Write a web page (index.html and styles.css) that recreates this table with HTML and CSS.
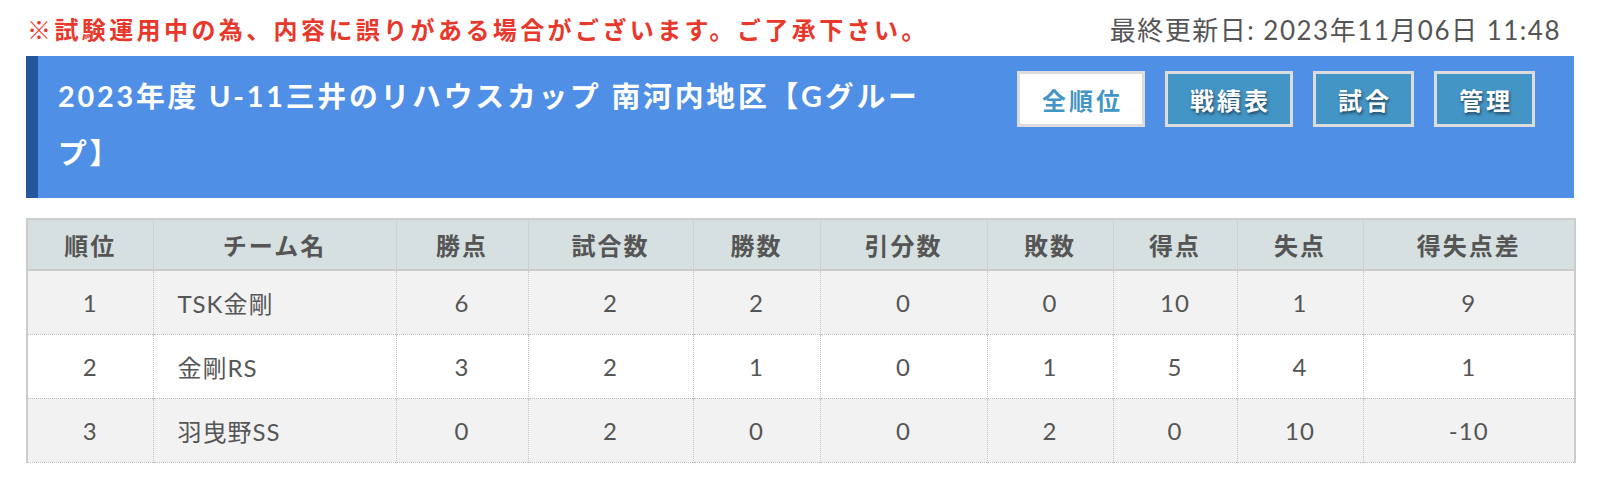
FILE: index.html
```html
<!DOCTYPE html>
<html lang="ja">
<head>
<meta charset="utf-8">
<title>順位表</title>
<link rel="stylesheet" href="styles.css">
</head>
<body>
<div class="page">
  <div class="topbar">
    <p class="notice">※試験運用中の為、内容に誤りがある場合がございます。ご了承下さい。</p>
    <p class="updated">最終更新日: 2023年11月06日 11:48</p>
  </div>
  <div class="header">
    <h1 class="title">2023年度 U-11三井のリハウスカップ 南河内地区【Gグループ】</h1>
    <nav class="buttons">
      <a class="btn btn-active">全順位</a>
      <a class="btn">戦績表</a>
      <a class="btn">試合</a>
      <a class="btn">管理</a>
    </nav>
  </div>
  <table class="standings">
    <colgroup>
      <col class="c-rank"><col class="c-team"><col class="c-pts"><col class="c-games"><col class="c-win"><col class="c-draw"><col class="c-lose"><col class="c-gf"><col class="c-ga"><col class="c-gd">
    </colgroup>
    <thead>
      <tr><th>順位</th><th>チーム名</th><th>勝点</th><th>試合数</th><th>勝数</th><th>引分数</th><th>敗数</th><th>得点</th><th>失点</th><th>得失点差</th></tr>
    </thead>
    <tbody>
      <tr class="odd"><td>1</td><td class="team">TSK金剛</td><td>6</td><td>2</td><td>2</td><td>0</td><td>0</td><td>10</td><td>1</td><td>9</td></tr>
      <tr class="even"><td>2</td><td class="team">金剛RS</td><td>3</td><td>2</td><td>1</td><td>0</td><td>1</td><td>5</td><td>4</td><td>1</td></tr>
      <tr class="odd"><td>3</td><td class="team">羽曳野SS</td><td>0</td><td>2</td><td>0</td><td>0</td><td>2</td><td>0</td><td>10</td><td>-10</td></tr>
    </tbody>
  </table>
</div>
</body>
</html>
```
FILE: styles.css
```css
* { box-sizing: border-box; }
html, body { margin: 0; padding: 0; background: #fff; }
body {
  font-family: "Lato", "Noto Sans CJK JP", sans-serif;
  color: #555;
}
.page {
  width: 1548px;
  margin-left: 26px;
}
.topbar {
  height: 56px;
  display: flex;
  align-items: center;
  justify-content: space-between;
}
.notice {
  margin: 0 0 0 1px;
  color: #e8382b;
  font-weight: 700;
  font-size: 24px;
  letter-spacing: 3.4px;
  font-family: "Noto Sans CJK JP", sans-serif;
}
.updated {
  margin: 0 13px 0 0;
  color: #555;
  font-size: 26px;
  letter-spacing: 1.5px;
}
.header {
  display: flex;
  align-items: flex-start;
  background: #508fe6;
  border-left: 12px solid #25559a;
  padding: 12px 39px 16px 20px;
}
.title {
  margin: 0;
  width: 872px;
  color: #fff;
  font-size: 28.8px;
  font-weight: 700;
  line-height: 57px;
  letter-spacing: 2.8px;
}
.buttons {
  margin-left: auto;
  margin-top: 3px;
  display: flex;
  gap: 20px;
}
.btn {
  display: flex;
  align-items: center;
  justify-content: center;
  height: 56px;
  padding: 0 19px 0 22px;
  border: 3px solid #dcdcdc;
  background: #4395c6;
  color: #fff;
  font-size: 24px;
  font-weight: 700;
  letter-spacing: 3px;
  text-shadow: 1px 2px 3px rgba(0, 0, 0, 0.55);
}
.btn-active {
  background: #fff;
  color: #4395c6;
  text-shadow: none;
}
.standings {
  margin-top: 20px;
  width: 1548px;
  table-layout: fixed;
  border-collapse: collapse;
  border: 2px solid #ccc;
  border-bottom: 1px dotted #bbb;
}
.c-rank { width: 126px; }
.c-team { width: 243px; }
.c-pts { width: 132px; }
.c-games { width: 165px; }
.c-win { width: 127px; }
.c-draw { width: 167px; }
.c-lose { width: 126px; }
.c-gf { width: 124px; }
.c-ga { width: 126px; }
.c-gd { width: 212px; }
.standings th {
  height: 51px;
  background: #d6e0e0;
  color: #555;
  font-size: 24px;
  font-weight: 700;
  letter-spacing: 2px;
  border-left: 1px dotted #c4c4c4;
  border-bottom: 2px solid #ccc;
  padding: 0;
}
.standings td {
  height: 64px;
  text-align: center;
  font-size: 24px;
  color: #555;
  letter-spacing: 1px;
  border-left: 1px dotted #c4c4c4;
  border-top: 1px dotted #bbb;
  padding: 0;
}
.standings th:first-child, .standings td:first-child { border-left: 2px solid #ccc; }
.standings td.team {
  text-align: left;
  padding-left: 24px;
}
.standings tr.odd td { background: #f2f2f2; }
.standings tr.even td { background: #fff; }
```
